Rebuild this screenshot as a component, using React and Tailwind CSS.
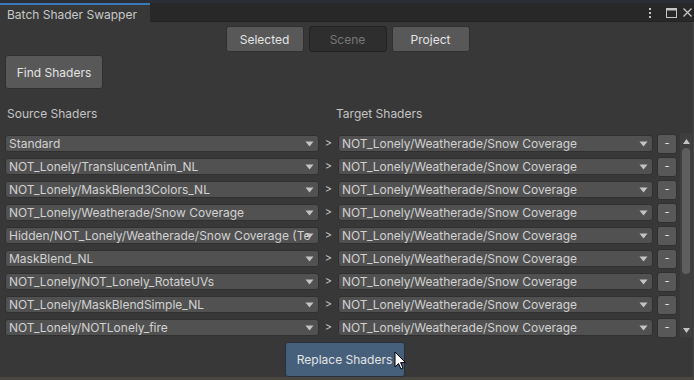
import React from "react";

const sources = [
  "Standard",
  "NOT_Lonely/TranslucentAnim_NL",
  "NOT_Lonely/MaskBlend3Colors_NL",
  "NOT_Lonely/Weatherade/Snow Coverage",
  "Hidden/NOT_Lonely/Weatherade/Snow Coverage (Terrain)",
  "MaskBlend_NL",
  "NOT_Lonely/NOT_Lonely_RotateUVs",
  "NOT_Lonely/MaskBlendSimple_NL",
  "NOT_Lonely/NOTLonely_fire",
];

const target = "NOT_Lonely/Weatherade/Snow Coverage";

const Dropdown = ({ label, width }) => (
  <div
    className={`relative flex items-center h-[17px] pl-[3px] pr-[7px] rounded-[3px] bg-[#515151] border border-[#303030] overflow-hidden ${width}`}
  >
    <span className="flex-1 overflow-hidden whitespace-nowrap text-[#d2d2d2] leading-[15px]">
      {label}
    </span>
    {/* dropdown arrow */}
    <svg width="9" height="6" viewBox="0 0 9 6" className="absolute right-[4px] top-[5px]">
      <path d="M0.5 0.5 L8.5 0.5 L4.5 5.5 Z" fill="#c4c4c4" />
    </svg>
  </div>
);

export default function App() {
  return (
    <div
      className="relative w-[694px] h-[380px] overflow-hidden bg-[#383838] text-[12px] flex flex-col"
      style={{ fontFamily: "Inter, 'Noto Sans', sans-serif" }}
    >
      {/* window title bar */}
      <div className="h-[3px] bg-[#2b2f35]" />
      <div className="flex h-[19px] bg-[#282828] border-b border-[#232323]">
        <div className="w-[150px] bg-[#383838] border-t-[2px] border-[#3a78b8] flex items-center pl-[7px] pt-[2px] text-[#c8c8c8] -mb-px">
          Batch Shader Swapper
        </div>
        <div className="flex-1" />
        <div className="flex items-center pr-[2px] pt-[1px]">
          <svg width="4" height="12" viewBox="0 0 4 12">
            <rect x="1" y="1" width="2" height="2" fill="#c4c4c4" />
            <rect x="1" y="5" width="2" height="2" fill="#c4c4c4" />
            <rect x="1" y="9" width="2" height="2" fill="#c4c4c4" />
          </svg>
          <svg width="11" height="10" viewBox="0 0 11 10" className="ml-[14px]">
            <rect x="0.5" y="0.5" width="10" height="9" fill="none" stroke="#c4c4c4" />
            <rect x="0.5" y="0.5" width="10" height="2" fill="#c4c4c4" />
          </svg>
          <svg width="9" height="9" viewBox="0 0 9 9" className="ml-[6px]">
            <path d="M0.5 0.5 L8.5 8.5 M8.5 0.5 L0.5 8.5" stroke="#c4c4c4" strokeWidth="1.3" />
          </svg>
        </div>
      </div>

      {/* body */}
      <div className="flex-1 flex flex-col border-r border-[#454545]">
        <div className="flex justify-center gap-[5px] mt-[4px] pl-[2px]">
          <div className="w-[78px] h-[26px] pt-[1px] rounded-[3px] bg-[#585858] border border-[#303030] flex items-center justify-center text-[#e4e4e4]">
            Selected
          </div>
          <div className="w-[78px] h-[26px] pt-[1px] rounded-[3px] bg-[#2e2e2e] border border-[#222222] flex items-center justify-center text-[#777777]">
            Scene
          </div>
          <div className="w-[78px] h-[26px] pt-[1px] rounded-[3px] bg-[#585858] border border-[#303030] flex items-center justify-center text-[#e4e4e4]">
            Project
          </div>
        </div>

        <div className="ml-[5px] mt-[3px] w-[98px] h-[34px] pt-[1px] rounded-[3px] bg-[#585858] border border-[#303030] flex items-center justify-center text-[#e4e4e4]">
          Find Shaders
        </div>

        <div className="flex h-[16px] mt-[16px] text-[#c4c4c4]">
          <div className="w-[336px] pl-[7px]">Source Shaders</div>
          <div>Target Shaders</div>
        </div>

        <div className="flex mt-[14px]">
          <div className="flex flex-col gap-[6px] pl-[5px]">
            {sources.map((s, i) => (
              <div key={i} className="flex items-center h-[17px]">
                <Dropdown label={s} width="w-[314px]" />
                <span className="w-[19px] text-center text-[#c4c4c4] text-[11px]">&gt;</span>
                <Dropdown label={target} width="w-[315px]" />
                <div className="ml-[4px] w-[20px] h-[20px] rounded-[3px] bg-[#585858] border border-[#303030] flex items-center justify-center text-[#e4e4e4] text-[11px]">
                  -
                </div>
              </div>
            ))}
          </div>
          {/* scrollbar */}
          <div className="ml-[3px] w-[12px] h-[204px] -mt-[2px] bg-[#3e3e3e] flex flex-col items-center pt-[6px] pb-[4px]">
            <svg width="7" height="5" viewBox="0 0 7 5">
              <path d="M0 5 L7 5 L3.5 0 Z" fill="#c4c4c4" />
            </svg>
            <div className="mt-[4px] w-[8px] h-[126px] rounded-[4px] bg-[#5e5e5e]" />
            <div className="flex-1" />
            <svg width="7" height="5" viewBox="0 0 7 5">
              <path d="M0 0 L7 0 L3.5 5 Z" fill="#c4c4c4" />
            </svg>
          </div>
        </div>

        <div className="flex justify-center mt-[5px] pr-[4px]">
          <div className="w-[120px] h-[35px] pt-[1px] rounded-[3px] bg-[#46607c] border border-[#27313c] flex items-center justify-center text-[#e4e4e4]">
            Replace Shaders
          </div>
        </div>
      </div>
      <div className="h-[3px] bg-[#4a4640]" />

      {/* mouse cursor */}
      <svg
        className="absolute left-[394px] top-[351px]"
        width="13"
        height="20"
        viewBox="0 0 13 20"
      >
        <path d="M1 1 L1 16 L4.5 12.5 L7 18 L9 17 L6.6 11.6 L11.5 11.6 Z" fill="#ffffff" stroke="#000000" strokeWidth="1" />
      </svg>
    </div>
  );
}
